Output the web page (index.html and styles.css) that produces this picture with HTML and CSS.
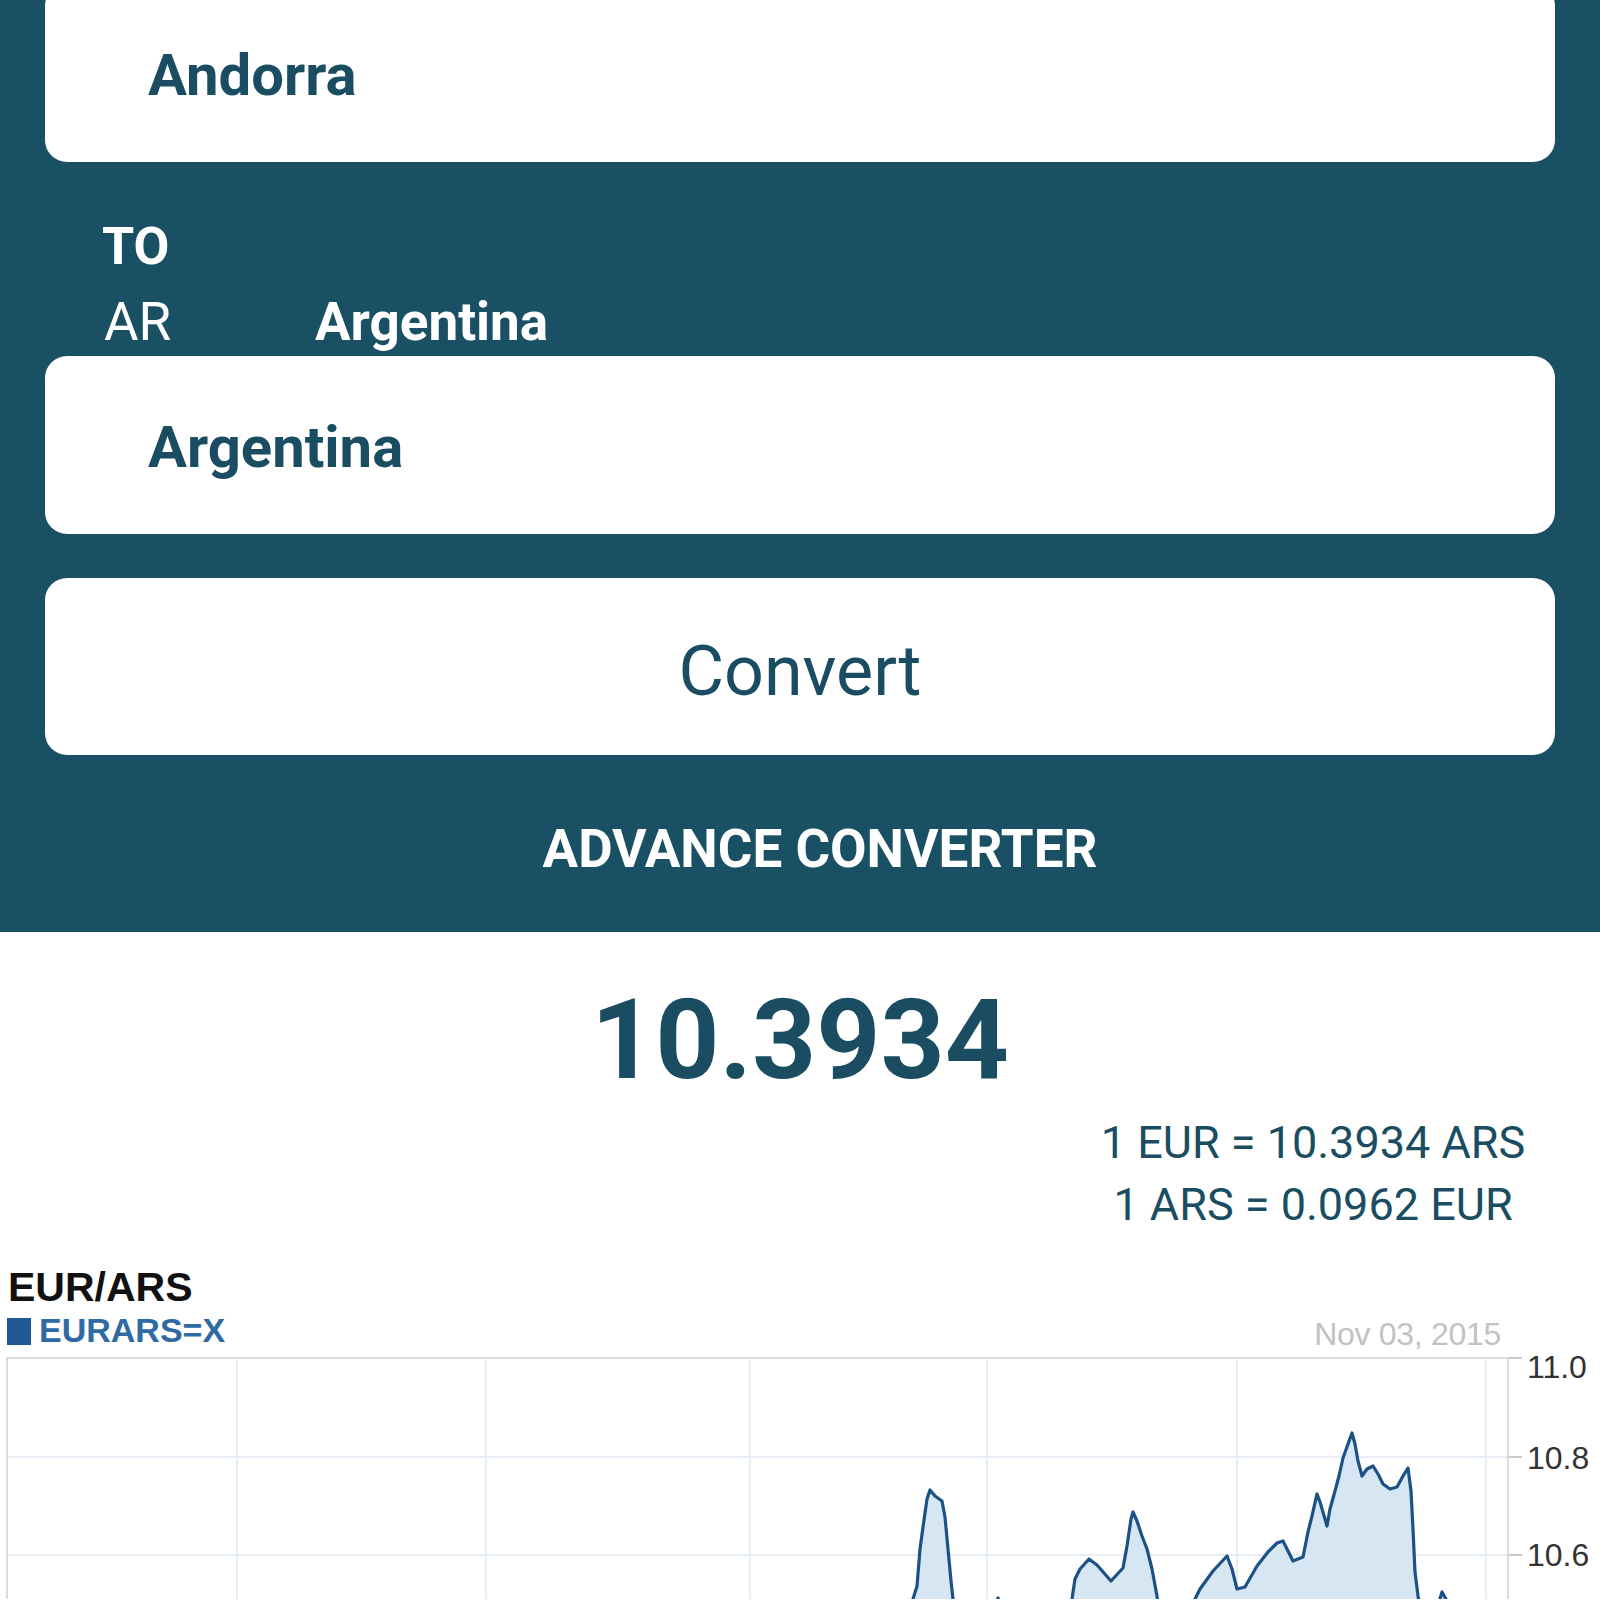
FILE: index.html
```html
<!DOCTYPE html>
<html lang="en">
<head>
<meta charset="utf-8">
<title>Currency Converter</title>
<link rel="stylesheet" href="styles.css">
</head>
<body>
<div class="page">
  <section class="panel">
    <div class="card card-top">Andorra</div>
    <div class="label-to">TO</div>
    <div class="to-row"><span class="code">AR</span><span class="name">Argentina</span></div>
    <div class="card">Argentina</div>
    <div class="convert">Convert</div>
    <div class="advance">ADVANCE CONVERTER</div>
  </section>
  <section class="result">
    <div class="amount">10.3934</div>
    <div class="rates-wrap">
      <div class="rates">
        <div class="rate">1 EUR = 10.3934 ARS</div>
        <div class="rate">1 ARS = 0.0962 EUR</div>
      </div>
    </div>
  </section>
  <section class="chart">
    <div class="chart-title">EUR/ARS</div>
    <div class="chart-legend">
      <span class="legend-item"><span class="legend-swatch"></span>EURARS=X</span>
      <span class="chart-date">Nov 03, 2015</span>
    </div>
    <svg class="plot" viewBox="0 1350 1600 250" width="1600" height="250">
      <g class="grid">
        <line x1="237" y1="1359" x2="237" y2="1600"/>
        <line x1="486" y1="1359" x2="486" y2="1600"/>
        <line x1="750" y1="1359" x2="750" y2="1600"/>
        <line x1="987" y1="1359" x2="987" y2="1600"/>
        <line x1="1237" y1="1359" x2="1237" y2="1600"/>
        <line x1="1486" y1="1359" x2="1486" y2="1600"/>
        <line x1="7" y1="1458" x2="1508" y2="1458"/>
        <line x1="7" y1="1556" x2="1508" y2="1556"/>
      </g>
      <path class="area" d="M 7 1700 L 7 1680 L 900 1660 L 913 1600 L 917 1587 L 920 1550 L 923 1528 L 927 1500 L 930 1491 L 935 1497 L 942 1502 L 945 1518 L 948 1550 L 951 1582 L 953 1600 L 960 1640 L 990 1630 L 998 1599 L 1003 1610 L 1030 1640 L 1068 1620 L 1072 1600 L 1075 1580 L 1080 1570 L 1089 1560 L 1097 1566 L 1111 1582 L 1123 1569 L 1127 1547 L 1131 1520 L 1133 1513 L 1137 1522 L 1142 1537 L 1147 1550 L 1152 1570 L 1157 1597 L 1160 1620 L 1185 1630 L 1195 1600 L 1200 1590 L 1213 1572 L 1227 1557 L 1232 1570 L 1237 1590 L 1245 1588 L 1257 1567 L 1268 1553 L 1277 1544 L 1283 1542 L 1288 1552 L 1293 1562 L 1303 1558 L 1308 1533 L 1312 1517 L 1317 1495 L 1320 1503 L 1325 1520 L 1327 1527 L 1330 1510 L 1335 1492 L 1339 1477 L 1343 1459 L 1348 1445 L 1352 1434 L 1355 1445 L 1358 1462 L 1362 1477 L 1367 1470 L 1373 1467 L 1378 1475 L 1383 1485 L 1390 1490 L 1397 1488 L 1403 1477 L 1408 1469 L 1411 1492 L 1413 1530 L 1415 1573 L 1418 1597 L 1422 1620 L 1437 1610 L 1442 1593 L 1447 1602 L 1460 1640 L 1486 1650 L 1486 1700 Z"/>
      <path class="frame" d="M 7 1620 L 7 1359 L 1508 1359 L 1508 1620"/>
      <g class="ticks">
        <line x1="1508" y1="1359" x2="1522" y2="1359"/>
        <line x1="1508" y1="1458" x2="1522" y2="1458"/>
        <line x1="1508" y1="1556" x2="1522" y2="1556"/>
      </g>
      <g class="axis-labels">
        <text x="1527" y="1379">11.0</text>
        <text x="1527" y="1470">10.8</text>
        <text x="1527" y="1567">10.6</text>
      </g>
    </svg>
  </section>
</div>
</body>
</html>
```

FILE: styles.css
```css
html, body {
  margin: 0;
  padding: 0;
  background: #ffffff;
}
body {
  width: 1600px;
  height: 1600px;
  overflow: hidden;
  font-family: Roboto, "Noto Sans", Arial, sans-serif;
}
.page {
  width: 1600px;
}
.panel {
  background: #1a5063;
  padding: 0 45px 53px 45px;
  display: flex;
  flex-direction: column;
}
.card {
  box-sizing: border-box;
  height: 178px;
  background: #ffffff;
  border-radius: 22px;
  padding: 57px 0 0 103px;
  font-size: 58px;
  line-height: 68px;
  font-weight: 700;
  color: #1a4d62;
}
.card-top {
  margin-top: -16px;
}
.label-to {
  margin-top: 55px;
  padding-left: 57px;
  font-size: 52px;
  line-height: 60px;
  font-weight: 700;
  color: #ffffff;
}
.to-row {
  margin-top: 15px;
  padding-left: 57px;
  display: flex;
  align-items: baseline;
  color: #ffffff;
  font-size: 53px;
  line-height: 60px;
  height: 64px;
}
.to-row .code {
  width: 211px;
  font-weight: 400;
  padding-left: 2px;
}
.to-row .name {
  font-weight: 700;
}
.convert {
  box-sizing: border-box;
  margin-top: 44px;
  height: 177px;
  background: #ffffff;
  border-radius: 22px;
  padding-top: 53px;
  text-align: center;
  font-size: 70px;
  line-height: 80px;
  font-weight: 400;
  color: #1a4d62;
}
.advance {
  margin-top: 64px;
  text-align: center;
  padding-left: 40px;
  font-size: 53px;
  line-height: 60px;
  font-weight: 700;
  color: #ffffff;
}
.result {
  padding-top: 43px;
}
.amount {
  text-align: center;
  font-size: 112px;
  line-height: 130px;
  font-weight: 700;
  color: #1a4d62;
}
.rates-wrap {
  margin-top: 7px;
  display: flex;
  justify-content: flex-end;
  padding-right: 47px;
}
.rates {
  width: 480px;
  text-align: center;
  font-size: 45px;
  line-height: 62px;
  color: #1a4d62;
}
.chart {
  padding-top: 28px;
  font-family: "Liberation Sans", Arial, sans-serif;
}
.chart-title {
  padding-left: 8px;
  font-size: 41px;
  line-height: 46px;
  font-weight: 700;
  color: #111111;
}
.chart-legend {
  margin-top: 1px;
  display: flex;
  justify-content: space-between;
  align-items: baseline;
  padding: 0 99px 0 7px;
  height: 38px;
  line-height: 38px;
}
.legend-item {
  display: flex;
  align-items: center;
  font-size: 34px;
  font-weight: 700;
  color: #2f6aa3;
}
.legend-swatch {
  display: inline-block;
  width: 24px;
  height: 27px;
  background: #1f5a96;
  margin-right: 8px;
  margin-top: 3px;
}
.chart-date {
  font-size: 32px;
  letter-spacing: -0.3px;
  color: #c2c2c2;
}
.plot {
  display: block;
}
.grid line {
  stroke: #e6edf4;
  stroke-width: 2;
}
.area {
  fill: #d6e6f2;
  stroke: #1d5185;
  stroke-width: 3.2;
  stroke-linejoin: round;
}
.frame {
  fill: none;
  stroke: #dcdcdc;
  stroke-width: 2;
}
.ticks line {
  stroke: #cccccc;
  stroke-width: 2;
}
.axis-labels text {
  font-family: "Liberation Sans", Arial, sans-serif;
  font-size: 32px;
  fill: #333333;
}
```
